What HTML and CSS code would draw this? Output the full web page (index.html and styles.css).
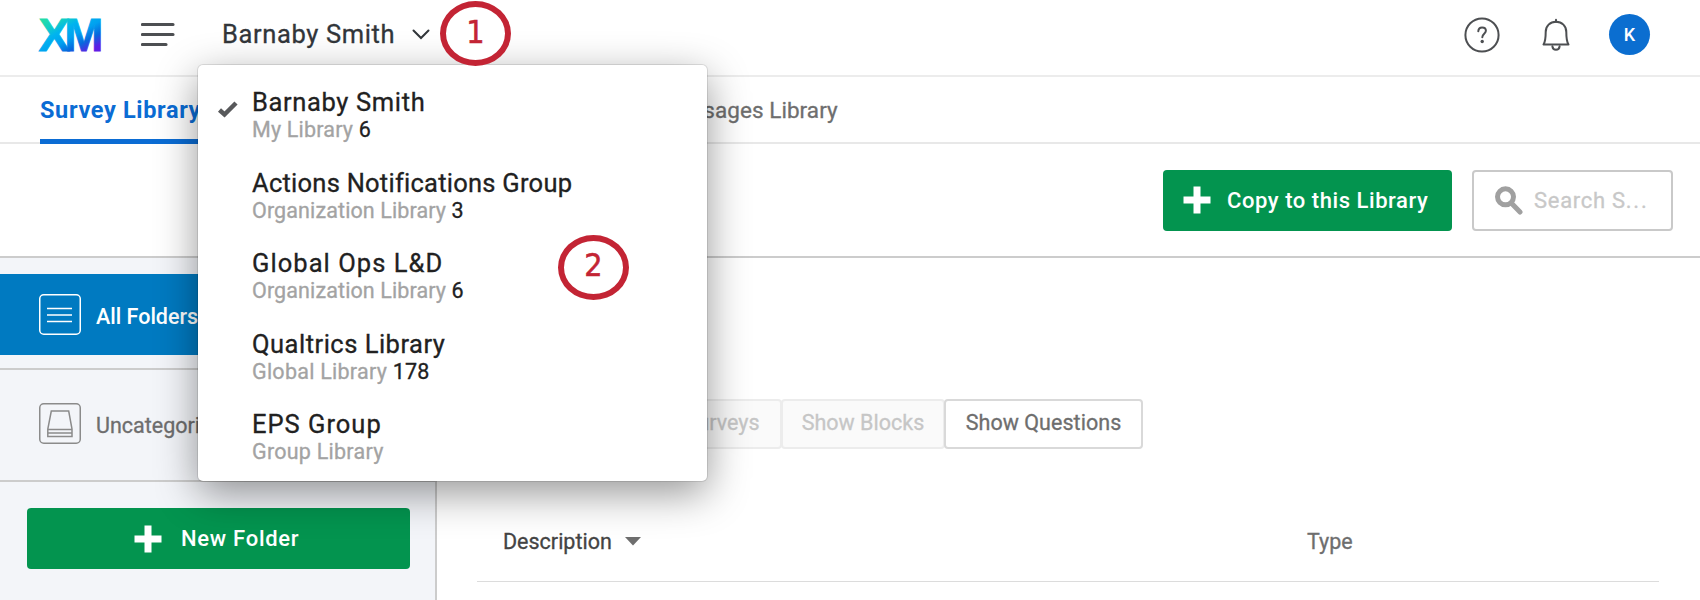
FILE: index.html
```html
<!DOCTYPE html>
<html lang="en">
<head>
<meta charset="utf-8">
<title>Survey Library</title>
<link rel="stylesheet" href="styles.css">
</head>
<body>
<div class="app">
  <header class="topbar">
    <svg class="logo" width="80" height="60" viewBox="0 0 80 60">
      <defs><linearGradient id="xm" gradientUnits="userSpaceOnUse" x1="19" y1="6" x2="46" y2="54"><stop offset="0.05" stop-color="#21dbaa"/><stop offset="0.18" stop-color="#14d0c0"/><stop offset="0.36" stop-color="#00b4ef"/><stop offset="0.55" stop-color="#00a1f0"/><stop offset="0.74" stop-color="#0768dd"/><stop offset="0.93" stop-color="#5f1ee5"/></linearGradient></defs>
      <text class="logo-text" x="1.500" y="46" fill="url(#xm)" stroke="url(#xm)">XM</text>
    </svg>
    <svg class="menu-icon" width="34" height="26" viewBox="0 0 34 26"><path d="M1.500 2.500H32M1.500 12.500H32M1.500 22.500H25" /></svg>
    <div class="picker"><span class="picker-name">Barnaby Smith</span><svg width="18" height="12" viewBox="0 0 18 12"><path d="M1.500 1.500L9 9L16.500 1.500"/></svg></div>
    <div class="topbar-actions">
      <svg class="help" width="36" height="36" viewBox="0 0 36 36"><circle cx="18" cy="18" r="16.600"/><path d="M14.300 14.300C14.400 11.600 15.900 10.400 18.100 10.400C20.300 10.400 21.900 11.700 21.900 13.800C21.900 16.700 18.300 17 18.300 20.300"/><circle class="dot" cx="18.200" cy="24.500" r="1.700"/></svg>
      <svg class="bell" width="30" height="34" viewBox="0 0 30 34"><path d="M2.500 26.500H27.500C25.500 23.500 25.300 20 25.300 14C25.300 8 21 3.800 15 3.800S4.700 8 4.700 14C4.700 20 4.500 23.500 2.500 26.500Z"/><path d="M11.400 28.300C11.700 30.700 13 31.800 15 31.800S18.300 30.700 18.600 28.300"/><path d="M15 1.800V4"/></svg>
      <div class="avatar">K</div>
    </div>
  </header>
  <nav class="tabs">
    <a class="tab active">Survey Library</a>
    <a class="tab messages">Messages Library</a>
  </nav>
  <div class="toolbar">
    <button class="btn copy"><svg width="28" height="28" viewBox="0 0 28 28"><path d="M10.500 0.500H17.500V10.500H27.500V17.500H17.500V27.500H10.500V17.500H0.500V10.500H10.500Z"/></svg><span>Copy to this Library</span></button>
    <div class="search"><svg width="28" height="29" viewBox="0 0 28 29"><circle cx="10.500" cy="10.800" r="8"/><path d="M16.500 17.200L25 26"/></svg><span>Search S<span class="dots">...</span></span></div>
  </div>
  <div class="body">
    <aside class="sidebar">
      <div class="folder-all">
        <svg width="42" height="41" viewBox="0 0 42 41"><rect x="0.750" y="0.750" width="40.500" height="39.500" rx="4"/><path d="M8 14.500H33M8 21H33M8 27.500H33"/></svg>
        <span>All Folders</span>
      </div>
      <div class="folder-un">
        <svg width="42" height="41" viewBox="0 0 42 41"><rect x="0.750" y="0.750" width="40.500" height="39.500" rx="4"/><path d="M12.300 8H29.700L33 26V33.500H8.800V26ZM8.800 26.500H33M8.800 30H33"/></svg>
        <span>Uncategorized</span>
      </div>
      <button class="btn new-folder"><svg width="28" height="28" viewBox="0 0 28 28"><path d="M10.500 0.500H17.500V10.500H27.500V17.500H17.500V27.500H10.500V17.500H0.500V10.500H10.500Z"/></svg><span>New Folder</span></button>
    </aside>
    <main class="main">
      <div class="toggles">
        <button class="toggle surveys">Show Surveys</button><button class="toggle blocks">Show Blocks</button><button class="toggle questions">Show Questions</button>
      </div>
      <div class="thead">
        <div class="col-desc"><span>Description</span><svg width="16" height="9" viewBox="0 0 16 9"><path d="M0 0H16L8 8.500Z"/></svg></div>
        <div class="col-type">Type</div>
      </div>
    </main>
  </div>
  <div class="dropdown">
    <div class="item"><svg class="check" width="22" height="18" viewBox="0 0 22 18"><path d="M2.500 10L7.500 14.500L19 3"/></svg><div class="name n1">Barnaby Smith</div><div class="sub s1">My Library <b>6</b></div></div>
    <div class="item"><div class="name n2">Actions Notifications Group</div><div class="sub s2">Organization Library <b>3</b></div></div>
    <div class="item"><div class="name n3">Global Ops L&amp;D</div><div class="sub s3">Organization Library <b>6</b></div></div>
    <div class="item"><div class="name n4">Qualtrics Library</div><div class="sub s4">Global Library <b>178</b></div></div>
    <div class="item"><div class="name n5">EPS Group</div><div class="sub s5">Group Library</div></div>
  </div>
  <div class="marker one">1</div>
  <div class="marker two">2</div>
</div>
</body>
</html>
```
FILE: styles.css
```css
* { box-sizing: border-box; }
body { margin: 0; font-family: Roboto, "Liberation Sans", sans-serif; background: #fff; }
svg { display: block; flex: none; }
.app { position: relative; width: 1700px; height: 600px; overflow: hidden; display: flex; flex-direction: column; background: #fff; }
.topbar { height: 77px; flex: none; border-bottom: 2px solid #ececec; display: flex; align-items: center; padding: 0 50px 6px 37px; }
.logo-text { font: bold 47px "Liberation Sans", Arial, sans-serif; letter-spacing: -5.500px; stroke-width: 0.8px; }
.menu-icon { margin-left: 24px; fill: none; stroke: #4d4f52; stroke-width: 3.200; stroke-linecap: round; }
.picker { margin-left: 47px; display: flex; align-items: center; gap: 17px; color: #32363a; font-size: 25.500px; letter-spacing: 0.62px; -webkit-text-stroke: 0.3px; white-space: nowrap; }
.picker-name { margin-top: -2px; }
.picker svg { fill: none; stroke: #32363a; stroke-width: 2; stroke-linecap: round; }
.topbar-actions { margin-left: auto; display: flex; align-items: center; }
.help, .bell { fill: none; stroke: #4d4f52; stroke-width: 2; stroke-linecap: round; stroke-linejoin: round; }
.help .dot { fill: #4d4f52; stroke: none; }
.bell { margin: 0 38px 0 41px; }
.avatar { width: 41px; height: 41px; border-radius: 50%; background: #0b6ed0; color: #fff; font-size: 18px; font-weight: 500; display: flex; align-items: center; justify-content: center; }
.tabs { height: 67px; flex: none; border-bottom: 2px solid #e8e8e8; display: flex; padding-left: 40px; }
.tab { height: 67px; font-size: 22.500px; line-height: 67px; white-space: nowrap; color: #6e6e6e; -webkit-text-stroke: 0.3px; }
.tab.active { width: 250px; color: #0b6cd4; font-size: 23.500px; letter-spacing: 0.65px; font-weight: 700; border-bottom: 5px solid #0b6cd4; -webkit-text-stroke: 0; }
.tab.messages { margin-left: 370px; letter-spacing: 0.05px; }
.toolbar { height: 114px; flex: none; border-bottom: 2px solid #ccc; display: flex; align-items: center; justify-content: flex-end; gap: 20px; padding-right: 27px; }
.btn { border: 0; border-radius: 4px; background: #03944f; color: #fff; font: 500 22px Roboto, sans-serif; display: flex; align-items: center; height: 61px; padding: 0; white-space: nowrap; }
.btn svg { fill: #fff; }
.copy { width: 289px; padding-left: 20px; gap: 16px; letter-spacing: 0.56px; }
.search { width: 201px; height: 61px; border: 2px solid #c9c9c9; border-radius: 4px; display: flex; align-items: center; padding-left: 21px; gap: 11px; color: #c8c8c8; font-size: 22px; letter-spacing: 0.7px; white-space: nowrap; -webkit-text-stroke: 0.3px; }
.dots { letter-spacing: 1.8px; }
.search svg { fill: none; stroke: #a0a0a0; stroke-width: 5; stroke-linecap: round; }
.body { flex: 1; min-height: 0; display: flex; }
.sidebar { width: 437px; flex: none; background: #f3f5f9; border-right: 2px solid #ccc; padding-top: 16px; }
.folder-all { height: 81px; background: #007ac1; display: flex; align-items: center; padding-left: 39px; gap: 15px; color: #fff; font-size: 21.500px; font-weight: 500; }
.folder-all span { padding-top: 4px; }
.folder-all svg, .folder-un svg { fill: none; stroke: #fff; stroke-width: 1.500; }
.folder-un { margin-top: 13px; height: 114px; border-top: 2px solid #ccc; border-bottom: 2px solid #ccc; display: flex; align-items: center; padding: 0 0 3px 39px; gap: 15px; color: #6e6e6e; font-size: 21.500px; -webkit-text-stroke: 0.3px; }
.folder-un svg { stroke: #8b8b8b; }
.folder-un span { padding-top: 4px; }
.new-folder { width: 383px; margin: 26px 0 0 27px; padding-left: 107px; gap: 19px; letter-spacing: 0.72px; }
.main { flex: 1; padding: 141px 41px 0 40px; }
.toggles { display: flex; padding-left: 133px; }
.toggle { height: 50px; border: 2px solid #ececec; border-radius: 4px; background: #fafafa; color: #c6c6c6; font: 21.500px Roboto, sans-serif; padding: 0 0 3px; white-space: nowrap; -webkit-text-stroke: 0.3px; }
.surveys { width: 172px; padding-right: 6px; }
.blocks { width: 164px; margin-left: -1px; }
.questions { width: 199px; margin-left: -1px; background: #fff; color: #6e6e6e; border-color: #d9d9d9; letter-spacing: 0.04px; }
.thead { height: 133px; border-bottom: 1px solid #dcdcdc; display: flex; align-items: flex-end; padding: 0 0 27px 26px; font-size: 21.500px; -webkit-text-stroke: 0.3px; }
.col-desc { width: 804px; display: flex; align-items: center; gap: 13px; color: #444; }
.col-desc svg { fill: #6e6e6e; }
.col-type { color: #6e6e6e; }
.dropdown { position: absolute; left: 198px; top: 65px; width: 509px; height: 416px; background: #fff; border-radius: 5px; box-shadow: 0 0 0 1px rgba(0,0,0,.1), 0 12px 42px rgba(0,0,0,.42); padding: 20px 0 0 54px; -webkit-text-stroke: 0.3px; }
.item { position: relative; height: 80.500px; }
.name { font-size: 25.500px; line-height: 34px; color: #212121; white-space: nowrap; }
.n1 { letter-spacing: 0.64px; }
.n2 { letter-spacing: 0.25px; }
.n3 { letter-spacing: 1.05px; }
.n4 { letter-spacing: 0.5px; }
.n5 { letter-spacing: 1px; }
.sub { font-size: 21.500px; line-height: 22px; color: #a3a3a3; white-space: nowrap; }
.s1 { letter-spacing: 0.18px; }
.s2, .s3 { letter-spacing: 0.11px; }
.s4, .s5 { letter-spacing: 0.25px; }
.sub b { font-weight: 400; color: #212121; }
.check { position: absolute; left: -35px; top: 15px; fill: none; stroke: #58595b; stroke-width: 4.500; }
.marker { position: absolute; width: 71px; height: 65px; border: 6px solid #c32434; border-radius: 50%; color: #c32434; background: #fff; font: 32px "DejaVu Sans Condensed", "DejaVu Sans", sans-serif; font-stretch: condensed; -webkit-text-stroke: 0.5px #c32434; display: flex; align-items: center; justify-content: center; padding-bottom: 4px; }
.one { left: 440px; top: 1px; }
.two { left: 558px; top: 235px; padding-bottom: 6px; }
```
